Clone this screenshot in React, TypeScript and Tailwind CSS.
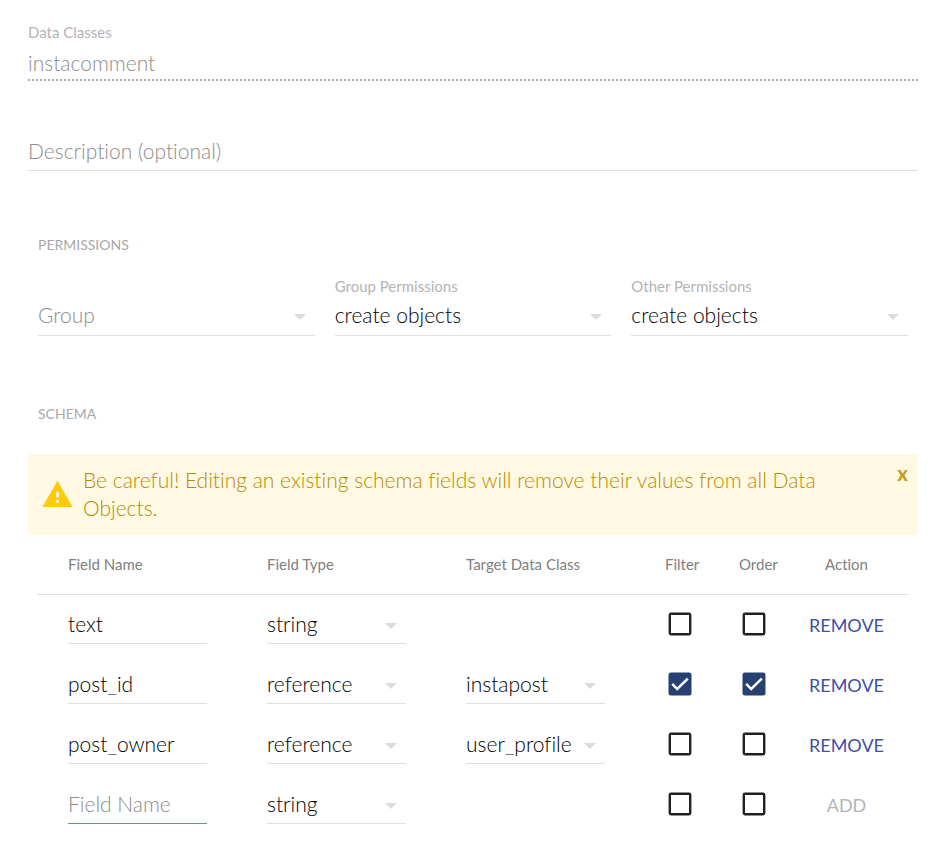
import { useState } from "react";
import { MdWarning } from "react-icons/md";

type Row = {
  name: string;
  type: string;
  target?: string;
  filter: boolean;
  order: boolean;
};

const initialRows: Row[] = [
  { name: "text", type: "string", filter: false, order: false },
  { name: "post_id", type: "reference", target: "instapost", filter: true, order: true },
  { name: "post_owner", type: "reference", target: "user_profile", filter: false, order: false },
];

const permissionOptions = ["create objects", "read objects", "no permissions"];
const typeOptions = ["string", "reference", "integer", "boolean"];
const classOptions = ["instapost", "user_profile"];

type DropdownProps = {
  id?: string;
  label?: string;
  options: string[];
  value: string;
  placeholder?: string;
  raised?: boolean;
};

function Dropdown(props: DropdownProps) {
  const [value, setValue] = useState(props.value);
  return (
    <div className={`grid h-10 items-center border-b border-[#dfdfdf] ${props.raised ? "pb-[2px]" : ""}`}>
      <select
        id={props.id}
        aria-label={props.label}
        value={value}
        onChange={(e) => setValue(e.target.value)}
        className={`col-start-1 row-start-1 w-full appearance-none bg-transparent pr-6 text-[21px] leading-7 font-light outline-none ${
          value === "" ? "text-[#8c8c8c]" : "text-black"
        }`}
      >
        {props.placeholder && <option value="">{props.placeholder}</option>}
        {props.options.map((o) => (
          <option key={o}>{o}</option>
        ))}
      </select>
      <svg
        viewBox="0 0 12 6"
        className="pointer-events-none col-start-1 row-start-1 mt-1 mr-[9px] h-[6px] w-3 justify-self-end"
        aria-hidden="true"
      >
        <path d="M0 0h12L6 6z" fill="#dcdcdc" />
      </svg>
    </div>
  );
}

function Checkbox(props: { label: string; defaultChecked: boolean }) {
  const [checked, setChecked] = useState(props.defaultChecked);
  return (
    <span className="grid size-[30px]">
      <svg viewBox="0 0 30 30" className="col-start-1 row-start-1 size-[30px]" aria-hidden="true">
        {checked ? (
          <>
            <rect x="3.5" y="3.5" width="23" height="23" rx="2.5" fill="#264072" />
            <path d="M7.2 14.8l5 5.2L22.8 9.6" fill="none" stroke="#fff" strokeWidth="2.5" />
          </>
        ) : (
          <rect x="4.8" y="4.8" width="20.4" height="20.4" rx="1.2" fill="none" stroke="#212121" strokeWidth="2.4" />
        )}
      </svg>
      <input
        type="checkbox"
        aria-label={props.label}
        checked={checked}
        onChange={(e) => setChecked(e.target.checked)}
        className="col-start-1 row-start-1 size-[30px] cursor-pointer appearance-none"
      />
    </span>
  );
}

function SchemaRow({ row }: { row?: Row }) {
  const name = row ? row.name : "new field";
  const underline = row ? "border-[#dfdfdf]" : "border-[#3d9fd0]";
  return (
    <tr className="h-[60px]">
      <td className="px-[30px]">
        <div className={`border-b ${underline}`}>
          <input
            type="text"
            aria-label={`Name of ${name}`}
            defaultValue={row?.name}
            placeholder="Field Name"
            className="block h-[39px] w-full text-[21px] font-light text-black outline-none placeholder:text-[#8c8c8c]"
          />
        </div>
      </td>
      <td className="px-[30px]">
        <Dropdown label={`Type of ${name}`} options={typeOptions} value={row ? row.type : "string"} />
      </td>
      <td className="px-[30px]">
        {row?.target && <Dropdown label={`Target class of ${name}`} options={classOptions} value={row.target} />}
      </td>
      <td className="pl-[30px]">
        <Checkbox label={`Filter by ${name}`} defaultChecked={row?.filter ?? false} />
      </td>
      <td className="pl-[30px]">
        <Checkbox label={`Order by ${name}`} defaultChecked={row?.order ?? false} />
      </td>
      <td className="pt-[2px] text-center text-lg">
        {row ? (
          <button type="button" className="text-[#3f51a5]">
            REMOVE
          </button>
        ) : (
          <button type="button" disabled className="text-[#b4b4b4]">
            ADD
          </button>
        )}
      </td>
    </tr>
  );
}

export default function App() {
  const [warning, setWarning] = useState(true);
  return (
    <main className="min-h-screen bg-white pt-5 pr-[13px] pb-5 pl-7 font-[Lato,'Noto_Sans',sans-serif] [font-variant-ligatures:none]">
      <div>
        <label htmlFor="class" className="block text-[15px] leading-6 text-[#b4b4b4]">
          Data Classes
        </label>
        <input
          id="class"
          type="text"
          disabled
          defaultValue="instacomment"
          className="block h-[37px] w-full border-b-2 border-dotted border-[#adadad] pt-[2px] text-[21px] font-light text-[#8c8c8c] outline-none"
        />
      </div>

      <input
        type="text"
        aria-label="Description (optional)"
        placeholder="Description (optional)"
        className="mt-[50px] block h-10 w-full border-b border-[#dfdfdf] text-[21px] font-light outline-none placeholder:text-[#8c8c8c]"
      />

      <section className="mt-[62px] px-[10px]">
        <h2 className="text-sm leading-6 text-[#a8a8a8]">PERMISSIONS</h2>
        <div className="mt-5 grid grid-cols-3 items-end gap-5">
          <Dropdown raised label="Group" options={["Admins"]} value="" placeholder="Group" />
          <div>
            <label htmlFor="group-permissions" className="block text-[15px] leading-[19px] text-[#b4b4b4]">
              Group Permissions
            </label>
            <Dropdown raised id="group-permissions" options={permissionOptions} value="create objects" />
          </div>
          <div>
            <label htmlFor="other-permissions" className="block text-[15px] leading-[19px] text-[#b4b4b4]">
              Other Permissions
            </label>
            <Dropdown raised id="other-permissions" options={permissionOptions} value="create objects" />
          </div>
        </div>
      </section>

      <section className="mt-[66px]">
        <h2 className="px-[10px] text-sm leading-6 text-[#a8a8a8]">SCHEMA</h2>
        {warning && (
          <div role="alert" className="mt-7 flex items-start rounded-[3px] bg-[#fff9e3] pt-3 pb-[13px] pl-[13px]">
            <MdWarning size={33} color="#ffca0a" className="mr-[9px] shrink-0 self-center" aria-hidden="true" />
            <p className="flex-1 text-[21px] leading-7 font-light text-[#b88c00]">
              Be careful! Editing an existing schema fields will remove their values from all Data Objects.
            </p>
            <button
              type="button"
              aria-label="Dismiss warning"
              onClick={() => setWarning(false)}
              className="w-[90px] pr-[10px] text-right text-xl leading-[14px] font-black text-[#c79f1c]"
            >
              x
            </button>
          </div>
        )}
        <div className="px-[10px]">
          <table className="w-full table-fixed border-collapse">
            <colgroup>
              <col />
              <col />
              <col />
              <col className="w-[74px]" />
              <col className="w-[76px]" />
              <col className="w-[123px]" />
            </colgroup>
            <thead>
              <tr className="h-[59px] border-b border-[#dfdfdf] text-left text-[15px] text-[#808080]">
                <th className="pl-[30px] font-normal">Field Name</th>
                <th className="pl-[30px] font-normal">Field Type</th>
                <th className="pl-[30px] font-normal">Target Data Class</th>
                <th className="pl-[30px] font-normal">Filter</th>
                <th className="pl-[30px] font-normal">Order</th>
                <th className="text-center font-normal">Action</th>
              </tr>
            </thead>
            <tbody>
              {initialRows.map((row) => (
                <SchemaRow key={row.name} row={row} />
              ))}
              <SchemaRow />
            </tbody>
          </table>
        </div>
      </section>
    </main>
  );
}
